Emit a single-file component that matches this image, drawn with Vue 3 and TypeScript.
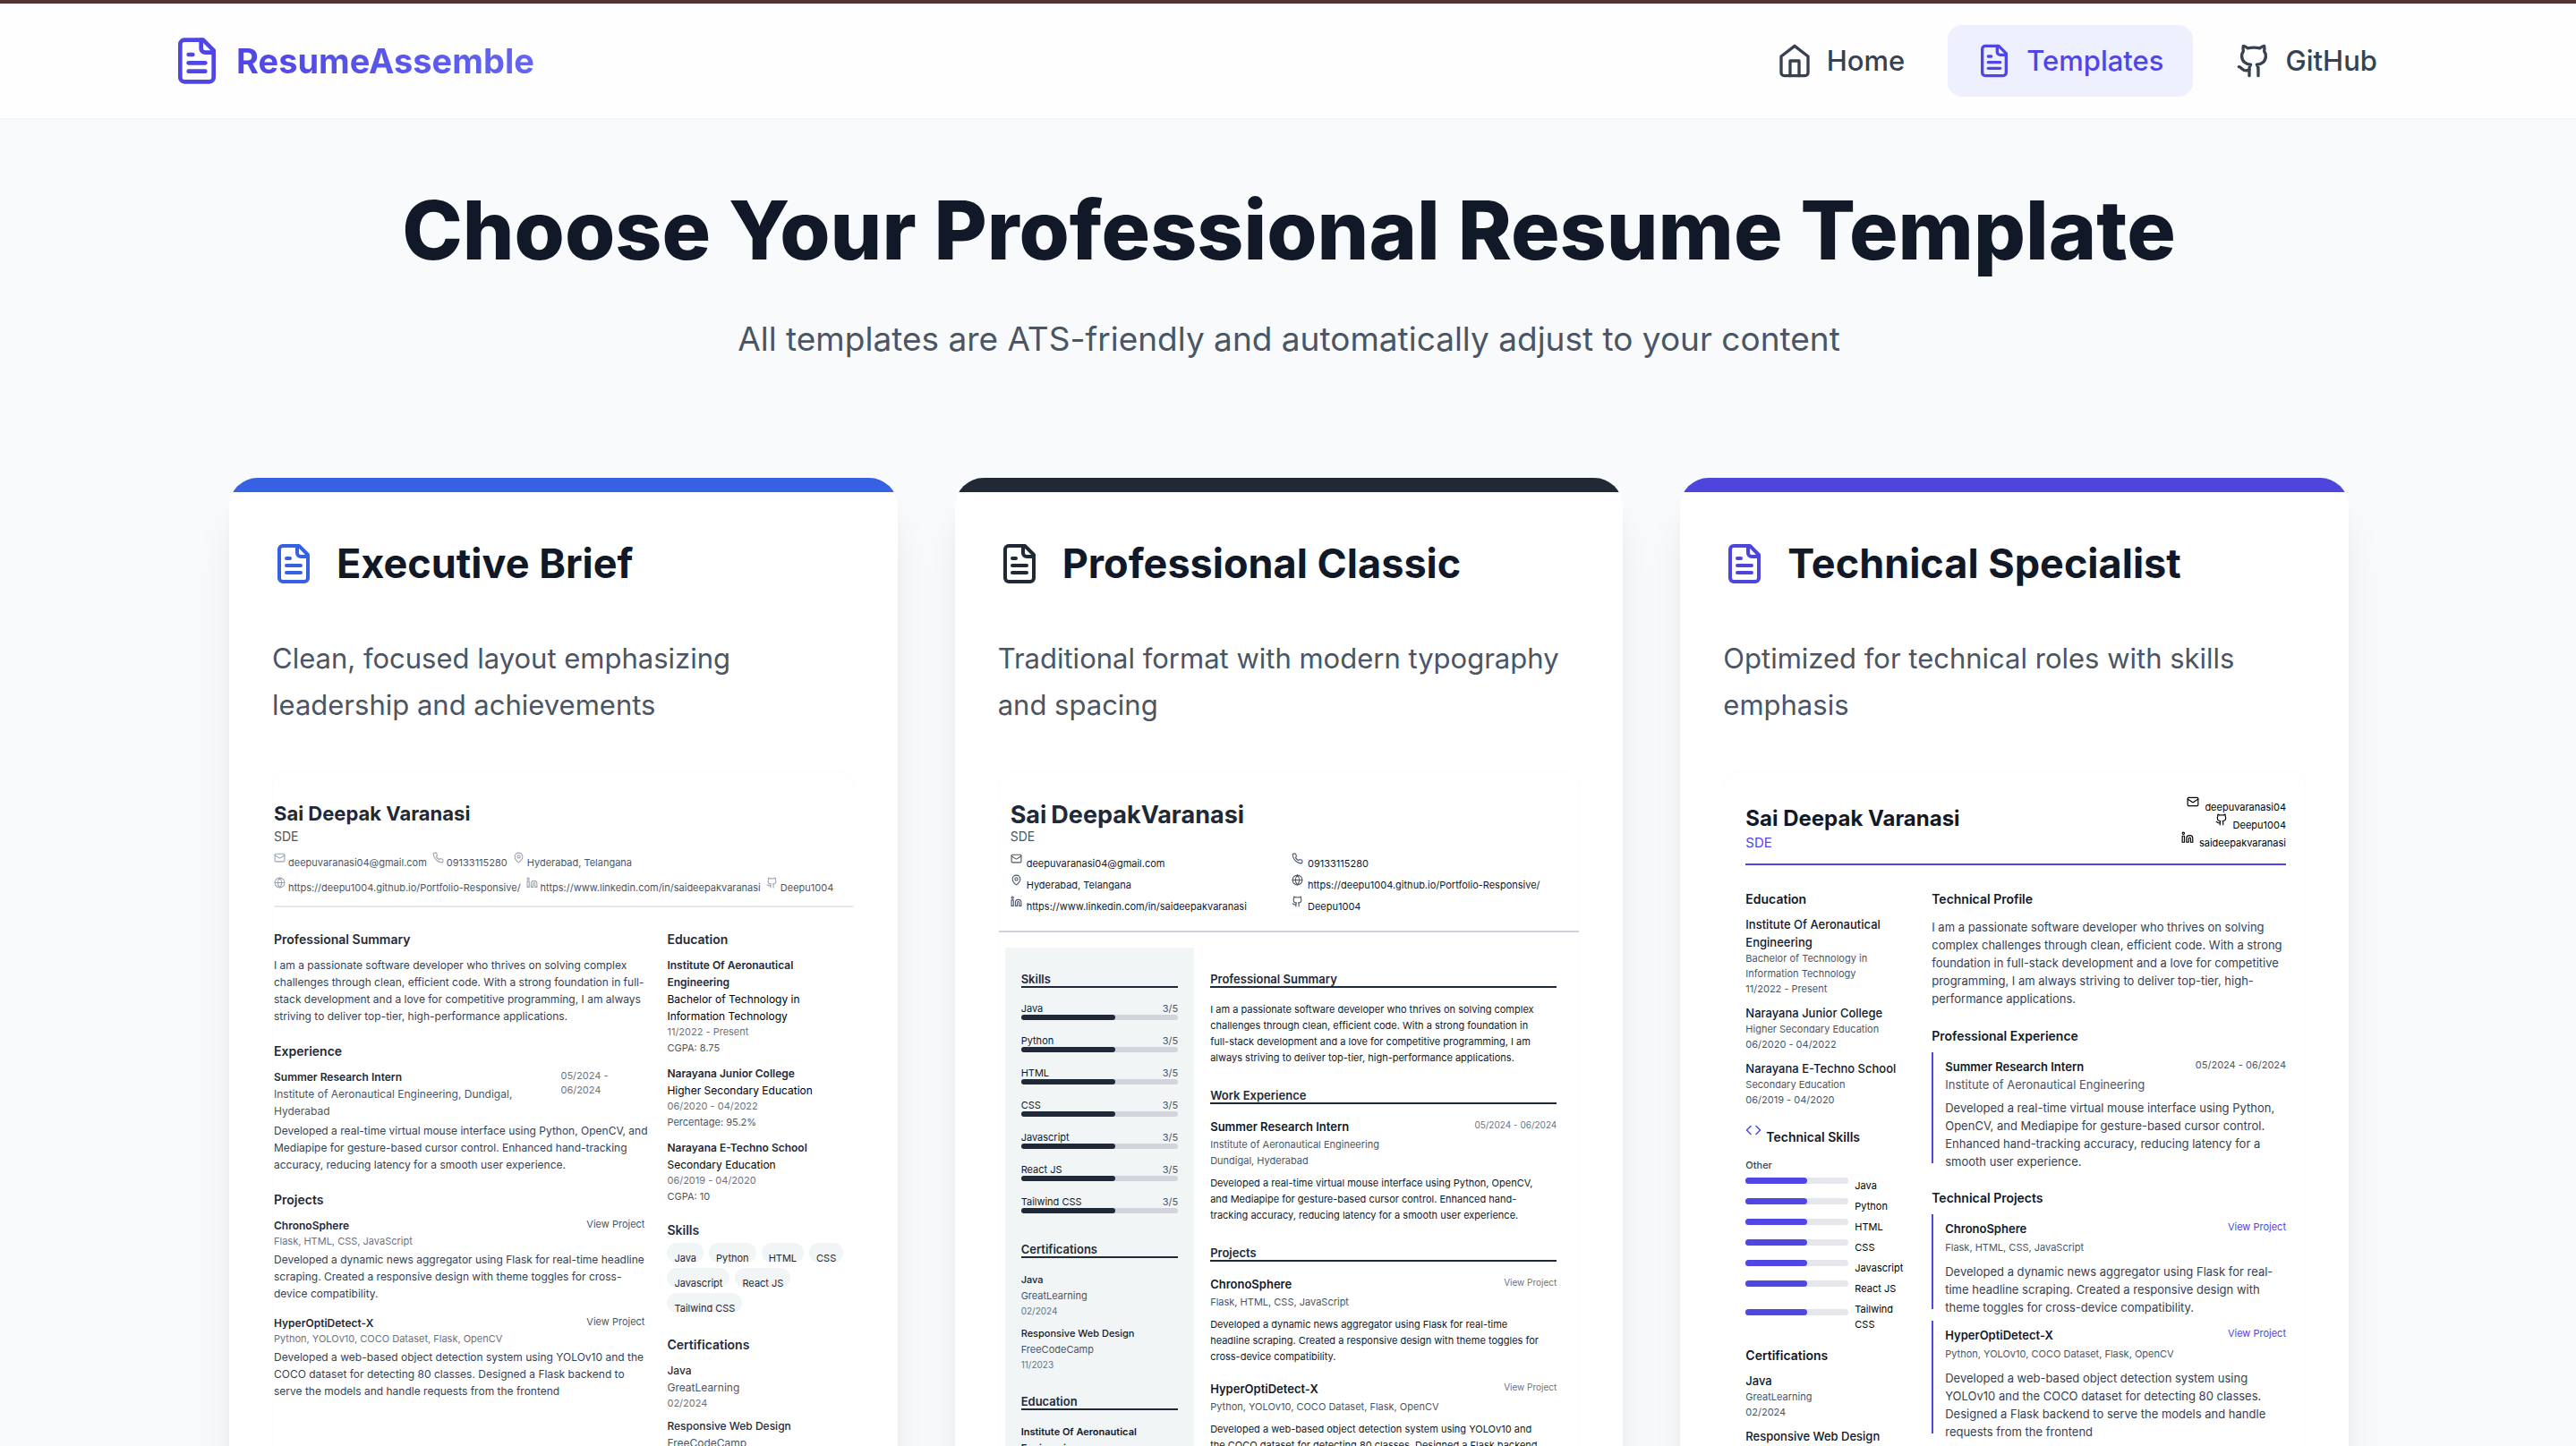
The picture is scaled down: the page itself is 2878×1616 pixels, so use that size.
<script setup lang="ts">
import { h } from 'vue'

type IconName = 'file' | 'home' | 'github' | 'mail' | 'phone' | 'pin' | 'globe' | 'linkedin' | 'code'

interface Contact { icon: IconName; text: string; href?: string }
interface School { name: string; degree: string; dates: string; grade: string }
interface Project { name: string; stack: string; text: string }
interface Template { id: 'brief' | 'classic' | 'tech'; title: string; blurb: string; color: string }

const paths: Record<IconName, string[]> = {
  file: [
    'M15 2H6a2 2 0 0 0-2 2v16a2 2 0 0 0 2 2h12a2 2 0 0 0 2-2V7Z',
    'M14 2v4a2 2 0 0 0 2 2h4',
    'M10 9H8',
    'M16 13H8',
    'M16 17H8'
  ],
  home: ['m3 9 9-7 9 7v11a2 2 0 0 1-2 2H5a2 2 0 0 1-2-2z', 'M9 22V12h6v10'],
  github: [
    'M15 22v-4a4.8 4.8 0 0 0-1-3.5c3 0 6-2 6-5.5.08-1.25-.27-2.48-1-3.5.28-1.15.28-2.35 0-3.5 0 0-1 0-3 1.5-2.64-.5-5.36-.5-8 0C6 2 5 2 5 2c-.3 1.15-.3 2.35 0 3.5A5.403 5.403 0 0 0 4 9c0 3.5 3 5.5 6 5.5-.39.49-.68 1.05-.85 1.65-.17.6-.22 1.23-.15 1.85v4',
    'M9 18c-4.51 2-5-2-7-2'
  ],
  mail: [
    'M4 4h16a2 2 0 0 1 2 2v12a2 2 0 0 1-2 2H4a2 2 0 0 1-2-2V6a2 2 0 0 1 2-2z',
    'm22 7-8.97 5.7a1.94 1.94 0 0 1-2.06 0L2 7'
  ],
  phone: [
    'M22 16.92v3a2 2 0 0 1-2.18 2 19.79 19.79 0 0 1-8.63-3.07 19.5 19.5 0 0 1-6-6 19.79 19.79 0 0 1-3.07-8.67A2 2 0 0 1 4.11 2h3a2 2 0 0 1 2 1.72 12.84 12.84 0 0 0 .7 2.81 2 2 0 0 1-.45 2.11L8.09 9.91a16 16 0 0 0 6 6l1.27-1.27a2 2 0 0 1 2.11-.45 12.84 12.84 0 0 0 2.81.7A2 2 0 0 1 22 16.92z'
  ],
  pin: ['M20 10c0 6-8 12-8 12s-8-6-8-12a8 8 0 0 1 16 0Z', 'M15 10a3 3 0 1 1-6 0 3 3 0 0 1 6 0Z'],
  globe: [
    'M22 12a10 10 0 1 1-20 0 10 10 0 0 1 20 0Z',
    'M12 2a14.5 14.5 0 0 0 0 20 14.5 14.5 0 0 0 0-20',
    'M2 12h20'
  ],
  linkedin: [
    'M16 8a6 6 0 0 1 6 6v7h-4v-7a2 2 0 0 0-2-2 2 2 0 0 0-2 2v7h-4v-7a6 6 0 0 1 6-6z',
    'M2 9h4v12H2z',
    'M6 4a2 2 0 1 1-4 0 2 2 0 0 1 4 0Z'
  ],
  code: ['m16 18 6-6-6-6', 'm8 6-6 6 6 6']
}

const Icon = (props: { name: IconName }) =>
  h(
    'svg',
    {
      viewBox: '0 0 24 24',
      fill: 'none',
      stroke: 'currentColor',
      'stroke-width': 2,
      'stroke-linecap': 'round',
      'stroke-linejoin': 'round',
      'aria-hidden': 'true'
    },
    paths[props.name].map((d) => h('path', { d }))
  )
Icon.props = ['name']

const links: { icon: IconName; label: string; active: boolean }[] = [
  { icon: 'home', label: 'Home', active: false },
  { icon: 'file', label: 'Templates', active: true },
  { icon: 'github', label: 'GitHub', active: false }
]

const templates: Template[] = [
  {
    id: 'brief',
    title: 'Executive Brief',
    blurb: 'Clean, focused layout emphasizing\nleadership and achievements',
    color: '#3761e3'
  },
  {
    id: 'classic',
    title: 'Professional Classic',
    blurb: 'Traditional format with modern typography\nand spacing',
    color: '#222936'
  },
  {
    id: 'tech',
    title: 'Technical Specialist',
    blurb: 'Optimized for technical roles with skills\nemphasis',
    color: '#4e46dc'
  }
]

const email: Contact = { icon: 'mail', text: 'deepuvaranasi04@gmail.com' }
const phone: Contact = { icon: 'phone', text: '09133115280' }
const place: Contact = { icon: 'pin', text: 'Hyderabad, Telangana' }
const site: Contact = { icon: 'globe', text: 'https://deepu1004.github.io/Portfolio-Responsive/', href: '#site' }
const linkedin: Contact = { icon: 'linkedin', text: 'https://www.linkedin.com/in/saideepakvaranasi', href: '#linkedin' }
const github: Contact = { icon: 'github', text: 'Deepu1004', href: '#github' }

const contacts = [email, phone, place, site, linkedin, github]
const techContacts: Contact[] = [
  { icon: 'mail', text: 'deepuvaranasi04' },
  { icon: 'github', text: 'Deepu1004' },
  { icon: 'linkedin', text: 'saideepakvaranasi' }
]

const skills = ['Java', 'Python', 'HTML', 'CSS', 'Javascript', 'React JS', 'Tailwind CSS'].map((name) => ({
  name,
  level: 3
}))

const schools: School[] = [
  {
    name: 'Institute Of Aeronautical\nEngineering',
    degree: 'Bachelor of Technology in\nInformation Technology',
    dates: '11/2022 - Present',
    grade: 'CGPA: 8.75'
  },
  {
    name: 'Narayana Junior College',
    degree: 'Higher Secondary Education',
    dates: '06/2020 - 04/2022',
    grade: 'Percentage: 95.2%'
  },
  {
    name: 'Narayana E-Techno School',
    degree: 'Secondary Education',
    dates: '06/2019 - 04/2020',
    grade: 'CGPA: 10'
  }
]

const certs = [
  { name: 'Java', by: 'GreatLearning', date: '02/2024' },
  { name: 'Responsive Web Design', by: 'FreeCodeCamp', date: '11/2023' }
]

const chrono = { name: 'ChronoSphere', stack: 'Flask, HTML, CSS, JavaScript' }
const hyper = { name: 'HyperOptiDetect-X', stack: 'Python, YOLOv10, COCO Dataset, Flask, OpenCV' }

const summary = {
  brief:
    'I am a passionate software developer who thrives on solving complex\nchallenges through clean, efficient code. With a strong foundation in full-\nstack development and a love for competitive programming, I am always\nstriving to deliver top-tier, high-performance applications.',
  classic:
    'I am a passionate software developer who thrives on solving complex\nchallenges through clean, efficient code. With a strong foundation in\nfull-stack development and a love for competitive programming, I am\nalways striving to deliver top-tier, high-performance applications.',
  tech:
    'I am a passionate software developer who thrives on solving\ncomplex challenges through clean, efficient code. With a strong\nfoundation in full-stack development and a love for competitive\nprogramming, I am always striving to deliver top-tier, high-\nperformance applications.'
}

const intern = {
  brief:
    'Developed a real-time virtual mouse interface using Python, OpenCV, and\nMediapipe for gesture-based cursor control. Enhanced hand-tracking\naccuracy, reducing latency for a smooth user experience.',
  classic:
    'Developed a real-time virtual mouse interface using Python, OpenCV,\nand Mediapipe for gesture-based cursor control. Enhanced hand-\ntracking accuracy, reducing latency for a smooth user experience.',
  tech:
    'Developed a real-time virtual mouse interface using Python,\nOpenCV, and Mediapipe for gesture-based cursor control.\nEnhanced hand-tracking accuracy, reducing latency for a\nsmooth user experience.'
}

const projects: Record<Template['id'], Project[]> = {
  brief: [
    {
      ...chrono,
      text: 'Developed a dynamic news aggregator using Flask for real-time headline\nscraping. Created a responsive design with theme toggles for cross-\ndevice compatibility.'
    },
    {
      ...hyper,
      text: 'Developed a web-based object detection system using YOLOv10 and the\nCOCO dataset for detecting 80 classes. Designed a Flask backend to\nserve the models and handle requests from the frontend'
    }
  ],
  classic: [
    {
      ...chrono,
      text: 'Developed a dynamic news aggregator using Flask for real-time\nheadline scraping. Created a responsive design with theme toggles for\ncross-device compatibility.'
    },
    {
      ...hyper,
      text: 'Developed a web-based object detection system using YOLOv10 and\nthe COCO dataset for detecting 80 classes. Designed a Flask backend\nto serve the models and handle requests from the frontend'
    }
  ],
  tech: [
    {
      ...chrono,
      text: 'Developed a dynamic news aggregator using Flask for real-\ntime headline scraping. Created a responsive design with\ntheme toggles for cross-device compatibility.'
    },
    {
      ...hyper,
      text: 'Developed a web-based object detection system using\nYOLOv10 and the COCO dataset for detecting 80 classes.\nDesigned a Flask backend to serve the models and handle\nrequests from the frontend'
    }
  ]
}

const share = (level: number) => `${(level / 5) * 100}%`
</script>

<template>
  <div class="page">
    <header class="topbar">
      <nav class="nav" aria-label="Main">
        <a class="brand" href="#home">
          <Icon name="file" class="brand-icon" />
          <span class="brand-name">ResumeAssemble</span>
        </a>
        <div class="nav-links">
          <a
            v-for="l in links"
            :key="l.label"
            class="nav-link"
            :class="{ active: l.active }"
            :href="'#' + l.label.toLowerCase()"
          >
            <Icon :name="l.icon" class="nav-icon" />{{ l.label }}
          </a>
        </div>
      </nav>
    </header>

    <main class="content">
      <h1 class="headline">Choose Your Professional Resume Template</h1>
      <p class="tagline">All templates are ATS-friendly and automatically adjust to your content</p>

      <div class="cards">
        <article v-for="t in templates" :key="t.id" class="card">
          <div class="card-strip" :style="{ background: t.color }"></div>
          <div class="card-body">
            <div class="card-head">
              <Icon name="file" class="card-icon" :style="{ color: t.color }" />
              <h2 class="card-title">{{ t.title }}</h2>
            </div>
            <p class="card-blurb">{{ t.blurb }}</p>

            <!-- Executive Brief -->
            <div v-if="t.id === 'brief'" class="preview brief">
              <h3 class="name">Sai Deepak Varanasi</h3>
              <p class="role">SDE</p>
              <ul class="contacts">
                <li v-for="c in contacts" :key="c.text" class="contact">
                  <Icon :name="c.icon" class="contact-icon" />
                  <a v-if="c.href" class="contact-text" :href="c.href">{{ c.text }}</a>
                  <span v-else class="contact-text">{{ c.text }}</span>
                </li>
              </ul>
              <div class="columns">
                <div class="col">
                  <h4>Professional Summary</h4>
                  <p class="para">{{ summary.brief }}</p>
                  <h4>Experience</h4>
                  <div class="row">
                    <div>
                      <h5>Summer Research Intern</h5>
                      <p class="org">Institute of Aeronautical Engineering, Dundigal,<br />Hyderabad</p>
                    </div>
                    <p class="small dates">05/2024 -<br />06/2024</p>
                  </div>
                  <p class="para gap">{{ intern.brief }}</p>
                  <h4>Projects</h4>
                  <div v-for="p in projects.brief" :key="p.name" class="item">
                    <div class="row">
                      <h5>{{ p.name }}</h5>
                      <a class="small view" href="#project">View Project</a>
                    </div>
                    <p class="small">{{ p.stack }}</p>
                    <p class="para gap">{{ p.text }}</p>
                  </div>
                </div>
                <div class="col">
                  <h4>Education</h4>
                  <div v-for="s in schools" :key="s.name" class="school">
                    <h5>{{ s.name }}</h5>
                    <p class="degree">{{ s.degree }}</p>
                    <p class="small">{{ s.dates }}</p>
                    <p class="small grade">{{ s.grade }}</p>
                  </div>
                  <h4>Skills</h4>
                  <ul class="pills">
                    <li v-for="s in skills" :key="s.name" class="pill">{{ s.name }}</li>
                  </ul>
                  <h4>Certifications</h4>
                  <div v-for="c in certs" :key="c.name" class="cert">
                    <h5>{{ c.name }}</h5>
                    <p class="org">{{ c.by }}</p>
                    <p class="small">{{ c.date }}</p>
                  </div>
                </div>
              </div>
            </div>

            <!-- Professional Classic -->
            <div v-else-if="t.id === 'classic'" class="preview classic">
              <div class="masthead">
                <h3 class="name"><span class="first">Sai</span><span>Deepak</span><span>Varanasi</span></h3>
                <p class="role">SDE</p>
                <ul class="contacts">
                  <li v-for="c in contacts" :key="c.text" class="contact">
                    <Icon :name="c.icon" class="contact-icon" />
                    <a v-if="c.href" class="contact-text" :href="c.href">{{ c.text }}</a>
                    <span v-else class="contact-text">{{ c.text }}</span>
                  </li>
                </ul>
              </div>
              <div class="columns">
                <div class="side">
                  <h4>Skills</h4>
                  <ul class="levels">
                    <li v-for="s in skills" :key="s.name">
                      <div class="row level-label">
                        <span>{{ s.name }}</span><span class="score">{{ s.level }}/5</span>
                      </div>
                      <div class="bar"><div class="fill" :style="{ width: share(s.level) }"></div></div>
                    </li>
                  </ul>
                  <h4>Certifications</h4>
                  <div v-for="c in certs" :key="c.name" class="cert">
                    <h5>{{ c.name }}</h5>
                    <p class="org">{{ c.by }}</p>
                    <p class="small">{{ c.date }}</p>
                  </div>
                  <h4>Education</h4>
                  <div v-for="s in schools" :key="s.name" class="school">
                    <h5>{{ s.name }}</h5>
                    <p class="org">{{ s.degree }}</p>
                    <p class="small">{{ s.dates }}</p>
                  </div>
                </div>
                <div class="main">
                  <h4>Professional Summary</h4>
                  <p class="para">{{ summary.classic }}</p>
                  <h4>Work Experience</h4>
                  <div class="item">
                    <div class="row">
                      <h5>Summer Research Intern</h5>
                      <p class="small">05/2024 - 06/2024</p>
                    </div>
                    <p class="org">Institute of Aeronautical Engineering<br />Dundigal, Hyderabad</p>
                    <p class="para gap">{{ intern.classic }}</p>
                  </div>
                  <h4>Projects</h4>
                  <div v-for="p in projects.classic" :key="p.name" class="item">
                    <div class="row">
                      <h5>{{ p.name }}</h5>
                      <a class="small view" href="#project">View Project</a>
                    </div>
                    <p class="org">{{ p.stack }}</p>
                    <p class="para gap">{{ p.text }}</p>
                  </div>
                </div>
              </div>
            </div>

            <!-- Technical Specialist -->
            <div v-else class="preview tech">
              <div class="masthead">
                <div>
                  <h3 class="name">Sai Deepak Varanasi</h3>
                  <p class="role">SDE</p>
                </div>
                <ul class="contacts">
                  <li v-for="c in techContacts" :key="c.text" class="contact">
                    <Icon :name="c.icon" class="contact-icon" />
                    <span class="contact-text">{{ c.text }}</span>
                  </li>
                </ul>
              </div>
              <div class="columns">
                <div class="col">
                  <h4>Education</h4>
                  <div v-for="s in schools" :key="s.name" class="school">
                    <h5>{{ s.name }}</h5>
                    <p class="small">{{ s.degree }}</p>
                    <p class="small">{{ s.dates }}</p>
                  </div>
                  <div class="skills-head">
                    <Icon name="code" class="code-icon" />
                    <h4>Technical Skills</h4>
                  </div>
                  <p class="group">Other</p>
                  <ul class="levels">
                    <li v-for="s in skills" :key="s.name" class="level">
                      <div class="bar"><div class="fill" :style="{ width: share(s.level) }"></div></div>
                      <span class="level-name">{{ s.name }}</span>
                    </li>
                  </ul>
                  <h4>Certifications</h4>
                  <div v-for="c in certs" :key="c.name" class="cert">
                    <h5>{{ c.name }}</h5>
                    <p class="small">{{ c.by }}</p>
                    <p class="small">{{ c.date }}</p>
                  </div>
                </div>
                <div class="col wide">
                  <h4>Technical Profile</h4>
                  <p class="para lead">{{ summary.tech }}</p>
                  <h4>Professional Experience</h4>
                  <div class="entry">
                    <div class="entry-body">
                      <div class="row">
                        <h5>Summer Research Intern</h5>
                        <p class="small">05/2024 - 06/2024</p>
                      </div>
                      <p class="org">Institute of Aeronautical Engineering</p>
                      <p class="para gap">{{ intern.tech }}</p>
                    </div>
                  </div>
                  <h4 class="after-entry">Technical Projects</h4>
                  <div v-for="p in projects.tech" :key="p.name" class="entry">
                    <div class="entry-body">
                      <div class="row">
                        <h5>{{ p.name }}</h5>
                        <a class="small view" href="#project">View Project</a>
                      </div>
                      <p class="stack">{{ p.stack }}</p>
                      <p class="para gap">{{ p.text }}</p>
                    </div>
                  </div>
                </div>
              </div>
            </div>
          </div>
        </article>
      </div>
    </main>
  </div>
</template>

<style>
body {
  margin: 0;
  background: #f9fafc;
}
</style>

<style scoped>
.page {
  height: 100vh;
  overflow-y: auto;
  scrollbar-width: none;
  background: #f9fafc;
  color: #111827;
  font-family: Inter, "Liberation Sans", sans-serif;
}

h1, h2, h3, h4, h5, p, ul {
  margin: 0;
  padding: 0;
}

ul {
  list-style: none;
}

a {
  color: inherit;
  text-decoration: none;
}

svg {
  display: block;
  flex: none;
}

/* Top bar */
.topbar {
  border-top: 4px solid #503431;
  border-bottom: 2px solid #f2f4f6;
  background: #fefefe;
}

.nav {
  display: flex;
  align-items: center;
  justify-content: space-between;
  box-sizing: border-box;
  max-width: 2560px;
  min-height: 128px;
  margin: 0 auto;
  padding: 24px 31px 24px 33px;
}

.brand {
  display: flex;
  align-items: center;
  gap: 16px;
  color: #4f46e5;
}

.brand-icon {
  width: 56px;
  height: 56px;
}

.brand-name {
  font-size: 38px;
  font-weight: 700;
  line-height: 56px;
  background: linear-gradient(90deg, #4f46e5, #6366f1);
  background-clip: text;
  color: transparent;
}

.nav-links {
  display: flex;
  gap: 16px;
}

.nav-link {
  display: flex;
  align-items: center;
  gap: 16px;
  padding: 16px 32px;
  border-radius: 16px;
  font-size: 31px;
  font-weight: 500;
  line-height: 48px;
  color: #374151;
}

.nav-link.active {
  background: #eef0fe;
  color: #4f46e5;
}

.nav-icon {
  width: 40px;
  height: 40px;
}

/* Intro */
.content {
  box-sizing: border-box;
  max-width: 2560px;
  margin: 0 auto;
  padding: 75px 95px 0 97px;
}

.headline {
  font-size: 91px;
  font-weight: 800;
  line-height: 96px;
  text-align: center;
}

.tagline {
  margin-top: 46px;
  font-size: 37px;
  line-height: 56px;
  text-align: center;
  color: #4b5563;
}

/* Cards */
.cards {
  display: grid;
  grid-template-columns: repeat(3, minmax(0, 1fr));
  gap: 64px;
  margin-top: 127px;
}

.card {
  overflow: hidden;
  border-radius: 32px;
  background: #ffffff;
  box-shadow: 0 40px 50px -10px rgba(0, 0, 0, 0.1), 0 16px 20px -12px rgba(0, 0, 0, 0.1);
}

.card-strip {
  height: 16px;
}

.card-body {
  padding: 48px;
}

.card-head {
  display: flex;
  align-items: center;
  gap: 24px;
}

.card-icon {
  width: 48px;
  height: 48px;
}

.card-title {
  font-size: 45px;
  font-weight: 700;
  line-height: 64px;
}

.card-blurb {
  margin-top: 48px;
  font-size: 31px;
  line-height: 52px;
  white-space: pre;
  color: #4b5563;
}

/* Parts shared by the three previews */
.preview {
  margin-top: 48px;
  border: 1px solid #fcfcfd;
  border-radius: 16px;
  font-size: 12px;
  line-height: 19px;
}

.preview h5,
.para,
.degree,
.small {
  white-space: pre;
}

.row {
  display: flex;
  justify-content: space-between;
}

.contact {
  display: flex;
  align-items: flex-start;
}

.org {
  color: #4b5563;
}

.small {
  color: #6b7280;
}

/* Executive Brief */
.brief {
  padding: 32px 1px 0;
  color: #1f2937;
}

.brief .name {
  font-size: 22px;
  font-weight: 700;
  line-height: 28px;
}

.brief .role {
  margin-top: 2px;
  font-size: 14px;
  line-height: 20px;
  color: #4b5563;
}

.brief .contacts {
  display: flex;
  flex-wrap: wrap;
  gap: 8px 6px;
  padding: 7px 0 12px;
  border-bottom: 2px solid #e5e7eb;
}

.brief .contact {
  gap: 3px;
}

.brief .contact-icon {
  width: 13px;
  height: 13px;
  color: #9ca3af;
}

.brief .contact-text {
  margin-top: 4px;
  font-size: 11px;
  line-height: 16px;
  color: #4b5563;
}

.brief .columns {
  display: grid;
  grid-template-columns: minmax(0, 2fr) minmax(0, 1fr);
  gap: 25px;
  padding-top: 26px;
}

.brief h4 {
  margin: 20px 0 9px;
  font-size: 14px;
  font-weight: 600;
  line-height: 20px;
}

.brief h4:first-child {
  margin-top: 0;
}

.brief h5 {
  font-size: 12px;
  font-weight: 600;
  line-height: 19px;
}

.brief .para {
  color: #374151;
}

.brief .para.gap {
  margin-top: 3px;
}

.brief .small {
  font-size: 11px;
  line-height: 16px;
}

.brief .dates {
  width: 94px;
}

.brief .row .view {
  color: #4b5563;
}

.brief .item + .item {
  margin-top: 14px;
}

.brief .degree {
  color: #000000;
}

.brief .grade {
  margin-top: 2px;
  color: #4b5563;
}

.brief .school + .school {
  margin-top: 11px;
}

.pills {
  display: flex;
  flex-wrap: wrap;
  gap: 6px;
  margin: -5px 0 26px;
}

.pill {
  box-sizing: border-box;
  height: 22px;
  padding: 9px 8px 0;
  border-radius: 11px;
  background: #f1f5f6;
  font-size: 11px;
  line-height: 16px;
}

.brief .cert + .cert {
  margin-top: 8px;
}

.brief .cert h5 {
  font-weight: 500;
}

/* Professional Classic */
.classic {
  font-size: 11px;
  line-height: 18px;
}

.classic .masthead {
  padding: 34px 13px 20px;
  border-bottom: 2px solid #d1d5db;
}

.classic .name {
  display: flex;
  font-size: 27px;
  font-weight: 700;
  line-height: 28px;
  color: #1f2937;
}

.classic .first {
  margin-right: 5px;
}

.classic .role {
  font-size: 14px;
  line-height: 20px;
  color: #4b5563;
}

.classic .contacts {
  display: grid;
  grid-template-columns: 1fr 1fr;
  gap: 5px 6px;
  margin-top: 8px;
}

.classic .contact {
  gap: 5px;
}

.classic .contact-icon {
  width: 13px;
  height: 13px;
  color: #4b5563;
}

.classic .contact-text {
  margin-top: 5px;
  line-height: 14px;
}

.classic .columns {
  display: grid;
  grid-template-columns: minmax(0, 212fr) minmax(0, 388fr);
  gap: 18px;
  padding: 17px 25px 0 7px;
}

.side {
  padding: 28px 18px;
  background: #f1f5f6;
}

.main {
  padding-top: 28px;
}

.classic h4 {
  margin: 26px 0 15px;
  border-bottom: 2px solid #1f2937;
  font-size: 13px;
  font-weight: 600;
  line-height: 15px;
  color: #1f2937;
}

.classic h4:first-child {
  margin-top: 0;
}

.classic .levels {
  display: grid;
  gap: 17px;
  padding: 2px 0 7px;
}

.classic .level-label {
  line-height: 13px;
}

.score {
  color: #4b5563;
}

.classic .bar {
  height: 6px;
  border-radius: 3px;
  background: #d1d5db;
}

.fill {
  height: 100%;
}

.classic .fill {
  border-radius: 3px;
  background: #1f2937;
}

.classic .small {
  font-size: 10px;
  line-height: 16px;
}

.classic .side h5 {
  font-size: 11px;
  font-weight: 600;
  line-height: 18px;
}

.classic .side .cert h5 {
  font-weight: 500;
}

.classic .cert + .cert,
.classic .school + .school {
  margin-top: 8px;
}

.classic .main h5 {
  font-size: 13px;
  font-weight: 600;
  line-height: 21px;
}

.classic .gap {
  margin-top: 7px;
}

.classic .item + .item {
  margin-top: 17px;
}

/* Technical Specialist */
.tech {
  padding: 26px 21px 0 24px;
  font-size: 13px;
  line-height: 20px;
}

.tech .masthead {
  display: flex;
  justify-content: space-between;
  padding-bottom: 12px;
  border-bottom: 2px solid #4f46e5;
}

.tech .name {
  margin-top: 12px;
  font-size: 24px;
  font-weight: 700;
  line-height: 28px;
}

.tech .role {
  margin-top: 2px;
  font-size: 15px;
  line-height: 22px;
  color: #4f46e5;
}

.tech .contacts {
  display: flex;
  flex-direction: column;
  align-items: flex-end;
  color: #000000;
}

.tech .contact {
  gap: 6px;
}

.tech .contact-icon {
  width: 14px;
  height: 14px;
}

.tech .contact-text {
  margin-top: 6px;
  font-size: 11px;
  line-height: 14px;
}

.tech .columns {
  display: grid;
  grid-template-columns: minmax(0, 188fr) minmax(0, 396fr);
  gap: 20px;
  padding-top: 28px;
}

.tech h4 {
  margin: 22px 0 8px;
  font-size: 14px;
  font-weight: 600;
  line-height: 20px;
}

.tech h4:first-child {
  margin-top: 0;
}

.tech h5 {
  font-size: 13px;
  font-weight: 600;
  line-height: 20px;
}

.tech .col:not(.wide) h5 {
  font-weight: 500;
}

.tech .small {
  font-size: 11px;
  line-height: 17px;
  color: #4b5563;
}

.tech .school + .school,
.tech .cert + .cert {
  margin-top: 8px;
}

.skills-head {
  display: flex;
  align-items: flex-start;
  gap: 5px;
  margin-top: 16px;
}

.tech .skills-head h4 {
  margin: 7px 0 0;
}

.code-icon {
  width: 18px;
  height: 18px;
  color: #4f46e5;
}

.group {
  margin-top: 13px;
  font-size: 11px;
  font-weight: 500;
  line-height: 17px;
  color: #374151;
}

.tech .levels {
  display: grid;
  gap: 6px;
}

.level {
  display: flex;
  align-items: center;
  gap: 7px;
}

.tech .bar {
  flex: 0 0 115px;
  height: 7px;
  border-radius: 4px;
  background: #e5e7eb;
}

.tech .fill {
  border-radius: 4px;
  background: #4f46e5;
}

.level-name {
  margin: 6px 0 -6px;
  font-size: 11px;
  line-height: 17px;
  color: #000000;
}

.tech .para {
  color: #374151;
}

.tech .lead {
  margin-top: 11px;
}

.tech .gap {
  margin-top: 6px;
}

.entry {
  display: flex;
  border-left: 2px solid #4f46e5;
  padding-left: 13px;
}

.entry + .entry {
  margin-top: 13px;
}

.entry-body {
  flex: 1;
  margin: 6px 0 -8px;
}

.tech .after-entry {
  margin-top: 29px;
}

.tech .row .view {
  color: #4f46e5;
}

.stack {
  font-size: 11px;
  line-height: 22px;
  color: #4b5563;
}
</style>
